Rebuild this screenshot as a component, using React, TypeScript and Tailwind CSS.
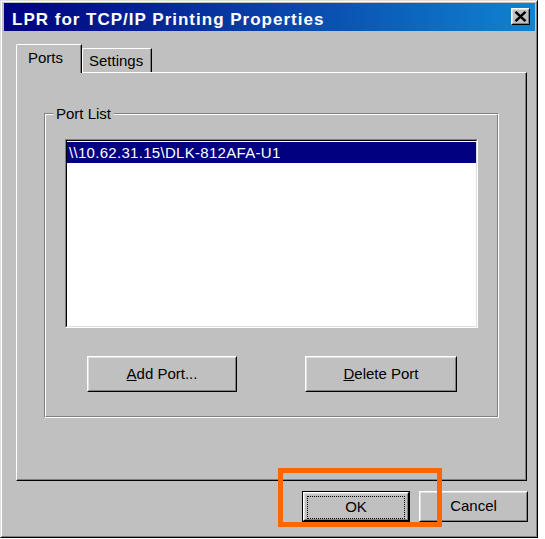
import React from "react";

function Raised({ className = "", children }: { className?: string; children?: React.ReactNode }) {
  return (
    <div className={`border border-t-white border-l-white border-r-black border-b-black ${className}`}>
      <div className="w-full h-full border border-t-[#dfdfdf] border-l-[#dfdfdf] border-r-[#808080] border-b-[#808080] flex items-center justify-center">
        {children}
      </div>
    </div>
  );
}

export default function App() {
  return (
    <div className="relative w-[545px] h-[539px] bg-white font-['Liberation_Sans',Arial,sans-serif] text-black text-[15px]">
      <div className="w-[538px] h-[538px] border border-t-[#dfdfdf] border-l-[#dfdfdf] border-r-black border-b-black">
        <div className="h-full border border-t-white border-l-white border-r-[#808080] border-b-[#808080] bg-[#c0c0c0] flex flex-col">
          {/* Title bar */}
          <div className="mt-[1px] ml-[2px] mr-[1px] h-[28px] flex items-start bg-[linear-gradient(to_right,#000080,#1084d0)]">
            <div className="ml-[8px] pt-[7px] text-[17px] leading-[20px] font-bold tracking-[1px] text-white whitespace-nowrap">
              LPR for TCP/IP Printing Properties
            </div>
            <Raised className="ml-auto mt-[5px] mr-[5px] w-[19px] h-[17px] bg-[#c0c0c0]">
              <svg width="13" height="11" viewBox="0 0 13 11">
                <path d="M1.5 0.8 L11.5 10.2 M11.5 0.8 L1.5 10.2" stroke="black" strokeWidth="2.4" fill="none" />
              </svg>
            </Raised>
          </div>

          {/* Tabs */}
          <div className="mt-[13px] ml-[14px] flex items-end">
            <div className="relative z-10 -mb-px w-[66px] h-[29px] bg-[#c0c0c0] border-l border-t border-r border-l-white border-t-white border-r-black rounded-tl-[2px]">
              <div className="h-full border-r border-r-[#808080] pl-[11px] pt-[4px] leading-[17px]">Ports</div>
            </div>
            <div className="w-[70px] h-[24px] border-l border-t border-r border-l-white border-t-white border-r-black rounded-tl-[2px]">
              <div className="h-full border-r border-r-[#808080] pl-[6px] pt-[3px] leading-[17px]">Settings</div>
            </div>
          </div>

          {/* Panel */}
          <div className="ml-[14px] w-[511px] h-[409px] border border-l-white border-t-white border-r-black border-b-black">
            <div className="h-full border-r border-b border-r-[#808080] border-b-[#808080] pt-[40px] pl-[27px]">
              {/* Group box */}
              <div className="relative w-[455px] h-[305px] border border-l-[#808080] border-t-[#808080] border-r-white border-b-white">
                <span className="absolute left-[8px] -top-[9px] px-[3px] bg-[#c0c0c0] leading-[17px]">Port List</span>
                <div className="h-full border border-l-white border-t-white border-r-[#808080] border-b-[#808080] flex flex-col">
                  <div className="mt-[24px] mx-[19px] h-[189px] border border-l-[#808080] border-t-[#808080] border-r-white border-b-white">
                    <div className="h-full border border-l-black border-t-black border-r-[#dfdfdf] border-b-[#dfdfdf] bg-white">
                      <div className="mt-[1px] h-[21px] bg-[#000080] text-white pl-[2px] leading-[21px] tracking-[0.3px] whitespace-nowrap">
                        \\10.62.31.15\DLK-812AFA-U1
                      </div>
                    </div>
                  </div>
                  <div className="mt-[28px] flex justify-between pl-[41px] pr-[40px]">
                    <Raised className="w-[150px] h-[36px]">
                      <span><u>A</u>dd Port...</span>
                    </Raised>
                    <Raised className="w-[152px] h-[36px]">
                      <span><u>D</u>elete Port</span>
                    </Raised>
                  </div>
                </div>
              </div>
            </div>
          </div>

          {/* Bottom buttons */}
          <div className="mt-[10px] mr-[8px] flex justify-end gap-[9px]">
            <div className="w-[108px] h-[31px] border border-black">
              <div className="w-full h-full border border-t-white border-l-white border-r-black border-b-black">
                <div className="w-full h-full border border-t-[#dfdfdf] border-l-[#dfdfdf] border-r-[#808080] border-b-[#808080] pt-[2px] px-[2px]">
                  <div className="w-full h-full border border-dotted border-black flex items-center justify-center">
                    OK
                  </div>
                </div>
              </div>
            </div>
            <Raised className="w-[109px] h-[31px]">
              <span>Cancel</span>
            </Raised>
          </div>
        </div>
      </div>

      {/* Orange highlight */}
      <div className="absolute left-[278px] top-[468px] w-[164px] h-[59px] border-[5px] border-[#ff6600]" />
    </div>
  );
}
